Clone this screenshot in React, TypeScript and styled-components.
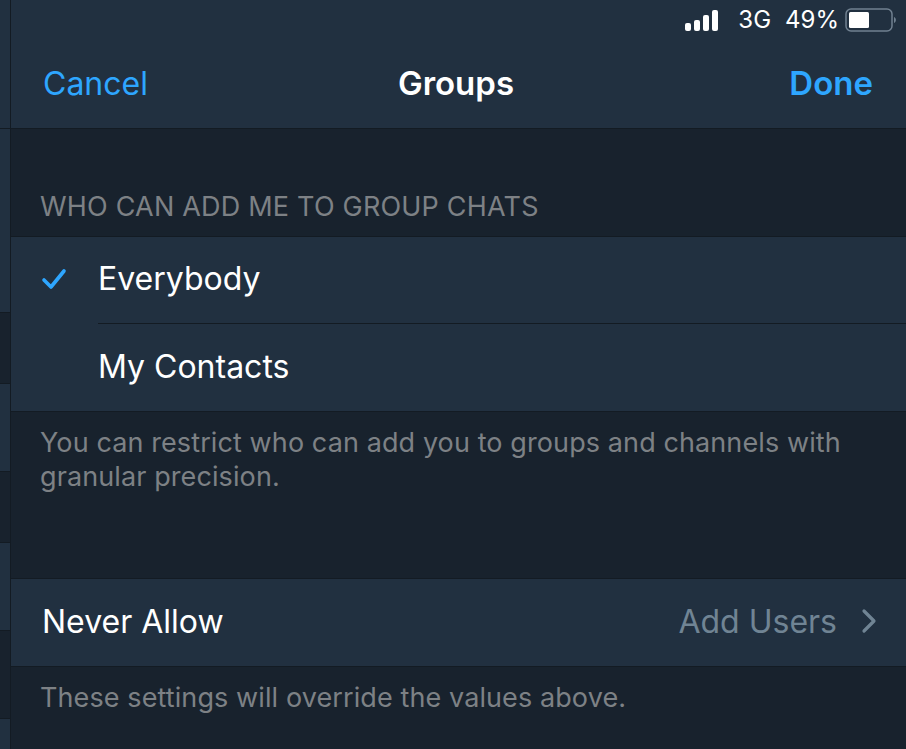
import React from 'react';
import styled, { createGlobalStyle } from 'styled-components';

const GlobalStyle = createGlobalStyle`
  html, body {
    margin: 0;
    padding: 0;
    background: #18222d;
  }
  body {
    font-family: Inter, 'Liberation Sans', sans-serif;
    -webkit-font-smoothing: antialiased;
  }
`;

const Screen = styled.div`
  display: flex;
  width: 906px;
  height: 749px;
  overflow: hidden;
  background: #18222d;
`;

const Sidebar = styled.div`
  display: flex;
  flex-direction: column;
  flex: 0 0 10px;
  background: #213040;
  border-right: 1px solid #131b23;
`;

const SidebarBand = styled.div<{ $height: number; $dark?: boolean }>`
  flex: 0 0 ${(p) => p.$height}px;
  box-sizing: border-box;
  background: ${(p) => (p.$dark ? '#18222d' : '#213040')};
  border-bottom: 1px solid #131b23;
`;

const Main = styled.div`
  flex: 1;
  display: flex;
  flex-direction: column;
  min-width: 0;
`;

const Header = styled.header`
  flex: 0 0 129px;
  box-sizing: border-box;
  display: flex;
  flex-direction: column;
  background: #213040;
  border-bottom: 1px solid #131b23;
`;

const StatusBar = styled.div`
  display: flex;
  justify-content: flex-end;
  align-items: center;
  height: 40px;
  padding-right: 8px;
  color: #fff;
  font-size: 24px;
`;

const StatusText = styled.span<{ $gap: number }>`
  margin-left: ${(p) => p.$gap}px;
  line-height: 42px;
`;

const Battery = styled.svg`
  margin-left: 6px;
`;

const NavBar = styled.div`
  display: flex;
  align-items: center;
  justify-content: space-between;
  height: 86px;
  padding: 0 33px 0 32px;
  box-sizing: border-box;
  font-size: 32px;
  position: relative;
`;

const NavAction = styled.span<{ $bold?: boolean }>`
  color: #2ea6ff;
  font-weight: ${(p) => (p.$bold ? 600 : 400)};
  font-size: ${(p) => (p.$bold ? 33 : 32)}px;
`;

const NavTitle = styled.span`
  color: #fff;
  font-weight: 600;
  font-size: 33px;
  position: absolute;
  left: 0;
  right: 0;
  text-align: center;
  padding-right: 5px;
`;

const SectionLabel = styled.div`
  height: 107px;
  box-sizing: border-box;
  padding: 62px 0 0 29px;
  color: #7d8185;
  font-size: 27px;
  letter-spacing: 0.2px;
  line-height: 32px;
`;

const Group = styled.div`
  display: flex;
  flex-direction: column;
  background: #213040;
  border-top: 1px solid #131b23;
  border-bottom: 1px solid #131b23;
`;

const Row = styled.div<{ $height?: number }>`
  display: flex;
  align-items: center;
  height: ${(p) => p.$height ?? 87}px;
  box-sizing: border-box;
  padding-bottom: ${(p) => (p.$height ? 4 : 3)}px;
  color: #fff;
  font-size: 32px;
`;

const CheckSlot = styled.div`
  flex: 0 0 87px;
  display: flex;
  justify-content: center;
  padding-right: 2px;
  padding-top: 2px;
  box-sizing: border-box;
`;

const RowDivider = styled.div`
  height: 1px;
  margin-left: 87px;
  background: #131b23;
`;

const LinkRow = styled(Row)`
  justify-content: space-between;
  padding: 0 29px 3px 31px;
`;

const RowValue = styled.span`
  display: flex;
  align-items: center;
  gap: 24px;
  color: #708494;
`;

const Footnote = styled.div<{ $height: number }>`
  height: ${(p) => p.$height}px;
  box-sizing: border-box;
  padding: 14px 40px 0 29px;
  color: #7d8185;
  font-size: 27px;
  letter-spacing: 0.1px;
  line-height: 34px;
`;

const App: React.FC = () => {
  return (
    <Screen>
      <GlobalStyle />
      <Sidebar>
        <SidebarBand $height={129} />
        <SidebarBand $height={184} />
        <SidebarBand $height={71} $dark />
        <SidebarBand $height={88} />
        <SidebarBand $height={71} $dark />
        <SidebarBand $height={88} />
        <SidebarBand $height={88} $dark />
      </Sidebar>
      <Main>
        <Header>
          <StatusBar>
            <svg width="34" height="21" viewBox="0 0 34 21" fill="#fff">
              <rect x="0" y="13" width="6" height="8" rx="2" />
              <rect x="9" y="10" width="6" height="11" rx="2" />
              <rect x="18" y="5" width="6" height="16" rx="2" />
              <rect x="27" y="0" width="6" height="21" rx="2" />
            </svg>
            <StatusText $gap={19}>3G</StatusText>
            <StatusText $gap={14}>49%</StatusText>
            <Battery width="53" height="24" viewBox="0 0 53 24">
              <rect x="1" y="1" width="46" height="22" rx="5" fill="none" stroke="#708090" strokeWidth="1.5" />
              <rect x="4" y="4" width="20" height="16" rx="1.5" fill="#fff" />
              <path d="M49 9 C51.5 10 51.5 14 49 15 Z" fill="#708090" />
            </Battery>
          </StatusBar>
          <NavBar>
            <NavAction>Cancel</NavAction>
            <NavTitle>Groups</NavTitle>
            <NavAction $bold>Done</NavAction>
          </NavBar>
        </Header>
        <SectionLabel>WHO CAN ADD ME TO GROUP CHATS</SectionLabel>
        <Group>
          <Row $height={86}>
            <CheckSlot>
              <svg width="26" height="22" viewBox="0 0 26 22" fill="none">
                <path d="M3 12 L10 19 L23 3" stroke="#2ea6ff" strokeWidth="3.6" strokeLinecap="round" strokeLinejoin="round" />
              </svg>
            </CheckSlot>
            Everybody
          </Row>
          <RowDivider />
          <Row>
            <CheckSlot />
            My Contacts
          </Row>
        </Group>
        <Footnote $height={166}>
          You can restrict who can add you to groups and channels with granular precision.
        </Footnote>
        <Group>
          <LinkRow>
            Never Allow
            <RowValue>
              Add Users
              <svg width="16" height="26" viewBox="0 0 16 26" fill="none">
                <path d="M3 3 L13 13 L3 23" stroke="#708494" strokeWidth="3.2" strokeLinecap="round" strokeLinejoin="round" />
              </svg>
            </RowValue>
          </LinkRow>
        </Group>
        <Footnote $height={82}>These settings will override the values above.</Footnote>
      </Main>
    </Screen>
  );
};

export default App;
